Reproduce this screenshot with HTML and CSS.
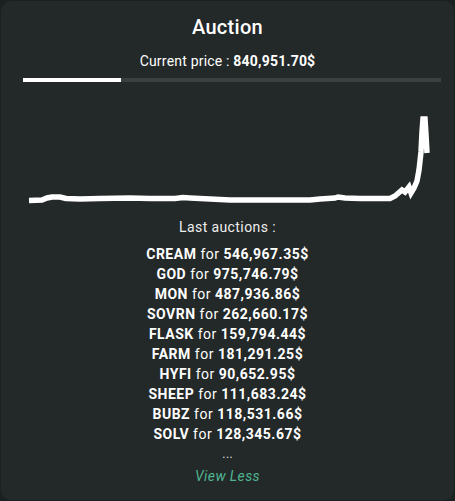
FILE: index.html
```html
<!DOCTYPE html>
<html>
<head>
<meta charset="utf-8">
<link rel="stylesheet" href="styles.css">
</head>
<body>
<div class="card">
  <h1 class="title">Auction</h1>
  <div class="price">Current price : <b>840,951.70$</b></div>
  <div class="progress"><div class="progress-fill" style="width:23.5%"></div></div>
  <div class="chart">
    <svg width="418" height="110" viewBox="23 100 418 110">
      <polyline fill="none" stroke="#ffffff" stroke-width="5.5" stroke-linejoin="miter" points="29,200.5 42,200 47,198 52,197 60,197 66,198.5 80,199 100,198.5 130,198 150,198.5 175,198.5 183,197.5 190,198 210,199 230,200 280,200 310,200 320,199 335,198 338,197 345,198 360,198.5 390,198.5 395,196 402,190 405,192 409,187 411,193 414,188 417,181 419,170 421,152 422,132 423,119 425,119 426,135 427,153"/>
    </svg>
  </div>
  <div class="last">Last auctions :</div>
  <ul class="list">
    <li><b>CREAM</b> for <b>546,967.35$</b></li>
    <li><b>GOD</b> for <b>975,746.79$</b></li>
    <li><b>MON</b> for <b>487,936.86$</b></li>
    <li><b>SOVRN</b> for <b>262,660.17$</b></li>
    <li><b>FLASK</b> for <b>159,794.44$</b></li>
    <li><b>FARM</b> for <b>181,291.25$</b></li>
    <li><b>HYFI</b> for <b>90,652.95$</b></li>
    <li><b>SHEEP</b> for <b>111,683.24$</b></li>
    <li><b>BUBZ</b> for <b>118,531.66$</b></li>
    <li><b>SOLV</b> for <b>128,345.67$</b></li>
  </ul>
  <div class="dots">...</div>
  <div class="view-less">View Less</div>
</div>
</body>
</html>
```
FILE: styles.css
```css
html, body {
  margin: 0;
  padding: 0;
  background: #1a2120;
}
body {
  width: 455px;
  height: 501px;
  font-family: Roboto, "Noto Sans", sans-serif;
  color: #ffffff;
}
.card {
  box-sizing: border-box;
  width: 453px;
  height: 499px;
  margin: 1px;
  background: #232828;
  border-radius: 10px;
  padding: 14px 14px 0 14px;
  display: flex;
  flex-direction: column;
  align-items: center;
}
.title {
  margin: 0;
  font-size: 20px;
  font-weight: 500;
  line-height: 24px;
  letter-spacing: 0.3px;
}
.price {
  margin-top: 13px;
  font-size: 14px;
  line-height: 18px;
  letter-spacing: 0.2px;
}
.price b { font-weight: 700; }
.progress {
  margin-top: 8px;
  margin-left: 8px;
  align-self: flex-start;
  width: 418px;
  height: 4px;
  background: #3a3f3f;
}
.progress-fill {
  height: 100%;
  background: #ffffff;
}
.chart {
  margin-top: 18px;
  margin-left: 8px;
  align-self: flex-start;
  height: 110px;
}
.chart svg { display: block; }
.last {
  margin-top: 8px;
  font-size: 14px;
  line-height: 18px;
  letter-spacing: 0.4px;
  color: #eeeeee;
}
.list {
  list-style: none;
  margin: 8px 0 0;
  padding: 0;
  text-align: center;
  font-size: 14px;
  line-height: 20px;
  letter-spacing: 0.5px;
}
.list b { font-weight: 700; }
.dots {
  margin-top: 2px;
  font-size: 14px;
  line-height: 14px;
  color: #cccccc;
}
.view-less {
  margin-top: 7px;
  font-size: 14px;
  font-style: italic;
  line-height: 18px;
  letter-spacing: 0.4px;
  color: #4fb591;
}
```
